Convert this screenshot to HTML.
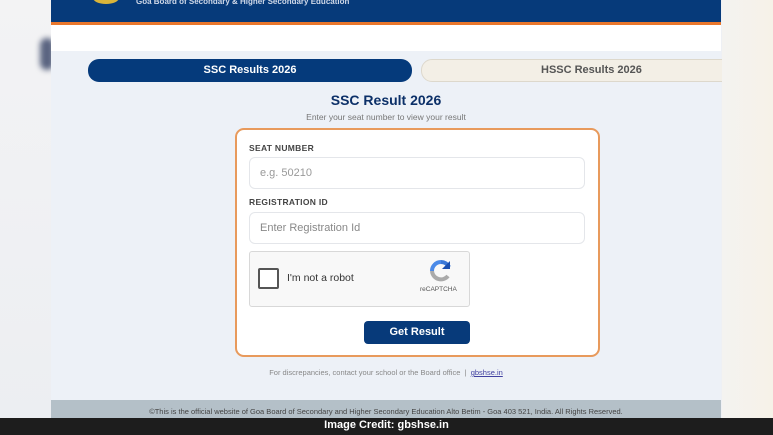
<!DOCTYPE html>
<html><head><meta charset="utf-8"><style>
*{margin:0;padding:0;box-sizing:border-box}
body{width:773px;height:435px;overflow:hidden;background:#eef0f4;font-family:"Liberation Sans",sans-serif;position:relative}
.abs{position:absolute}
</style></head><body>
<div class="abs" style="left:0;top:0;width:51px;height:435px;background:linear-gradient(#f3f3f4,#eceef2)"></div>
<div class="abs" style="left:40px;top:38px;width:14px;height:32px;background:#5a6480;border-radius:8px;filter:blur(3px)"></div>
<div class="abs" style="left:51px;top:0;width:670px;height:22px;background:#063a7a"></div>
<div class="abs" style="left:93px;top:-8px;width:26px;height:12px;border-radius:50%;background:#d9b43a"></div>
<div class="abs" style="left:136px;top:-3px;color:#cfd8e8;font-size:8px;font-weight:bold">Goa Board of Secondary &amp; Higher Secondary Education</div>
<div class="abs" style="left:51px;top:22px;width:670px;height:3px;background:#e9772c"></div>
<div class="abs" style="left:51px;top:25px;width:670px;height:26px;background:#fff"></div>
<div class="abs" style="left:51px;top:51px;width:670px;height:349px;background:#edf1f7"></div>
<div class="abs" style="left:88px;top:59px;width:324px;height:23px;background:#053a7b;border-radius:11px;color:#fff;font-size:11px;font-weight:bold;text-align:center;line-height:23px">SSC Results 2026</div>
<div class="abs" style="left:421px;top:59px;width:330px;height:23px;background:#f3efe6;border:1px solid #ddd8cc;border-radius:11px;color:#555;font-size:11px;font-weight:bold;line-height:21px"><span style="margin-left:119px">HSSC Results 2026</span></div>
<div class="abs" style="left:722px;top:0;width:51px;height:435px;background:linear-gradient(90deg,#f4f3f0,#f6f2e8)"></div>
<div class="abs" style="left:51px;top:92px;width:670px;text-align:center;color:#0c3068;font-size:14px;font-weight:bold">SSC Result 2026</div>
<div class="abs" style="left:51px;top:112px;width:670px;text-align:center;color:#777;font-size:8.5px">Enter your seat number to view your result</div>
<div class="abs" style="left:235px;top:128px;width:365px;height:229px;background:#fff;border:2px solid #e89a5c;border-radius:9px"></div>
<div class="abs" style="left:249px;top:143px;color:#444;font-size:8.5px;font-weight:bold;letter-spacing:.3px">SEAT NUMBER</div>
<div class="abs" style="left:249px;top:157px;width:336px;height:32px;border:1px solid #e4e6ea;border-radius:6px;color:#999;font-size:11px;line-height:30px;padding-left:10px">e.g. 50210</div>
<div class="abs" style="left:249px;top:197px;color:#444;font-size:8.5px;font-weight:bold;letter-spacing:.3px">REGISTRATION ID</div>
<div class="abs" style="left:249px;top:212px;width:336px;height:32px;border:1px solid #e4e6ea;border-radius:6px;color:#888;font-size:11px;line-height:30px;padding-left:10px">Enter Registration Id</div>
<div class="abs" style="left:249px;top:251px;width:221px;height:56px;background:#f8f8f8;border:1px solid #d8d8d8;border-radius:3px"></div>
<div class="abs" style="left:258px;top:268px;width:21px;height:21px;border:2px solid #555;border-radius:2px;background:#fff"></div>
<div class="abs" style="left:287px;top:272px;color:#333;font-size:10.5px">I'm not a robot</div>
<svg class="abs" style="left:428px;top:258px" width="26" height="26" viewBox="0 0 26 26"><path d="M13 4a9 9 0 0 1 8 5" stroke="#3a78d8" stroke-width="4" fill="none"/><path d="M22 3v8h-8z" fill="#1a4fb0"/><path d="M4 13a9 9 0 0 0 16 5" stroke="#aaa" stroke-width="4" fill="none"/><path d="M13 4a9 9 0 0 0-9 9" stroke="#4a8ae8" stroke-width="4" fill="none"/></svg>
<div class="abs" style="left:420px;top:286px;color:#555;font-size:6.5px">reCAPTCHA</div>
<div class="abs" style="left:364px;top:321px;width:106px;height:23px;background:#073a7a;border-radius:4px;color:#fff;font-size:11px;font-weight:bold;text-align:center;line-height:23px">Get Result</div>
<div class="abs" style="left:51px;top:368px;width:670px;text-align:center;color:#888;font-size:7.5px">For discrepancies, contact your school or the Board office &nbsp;| &nbsp;<span style="color:#4040a0;text-decoration:underline">gbshse.in</span></div>
<div class="abs" style="left:51px;top:400px;width:670px;height:35px;background:#b4c0c8"></div>
<div class="abs" style="left:51px;top:407px;width:670px;text-align:center;color:#444;font-size:7.5px">©This is the official website of Goa Board of Secondary and Higher Secondary Education Alto Betim - Goa 403 521, India. All Rights Reserved.</div>
<div class="abs" style="left:0;top:418px;width:773px;height:17px;background:#1d1d1d"></div>
<div class="abs" style="left:0;top:419px;width:773px;text-align:center;color:#fff;font-size:11px;font-weight:bold">Image Credit: gbshse.in</div>
</body></html>
